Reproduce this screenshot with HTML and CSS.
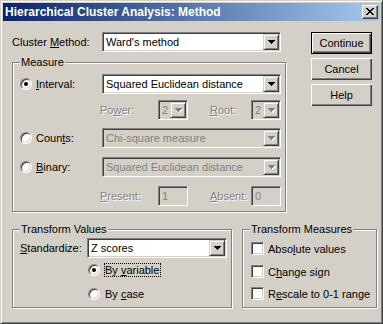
FILE: index.html
```html
<!DOCTYPE html>
<html>
<head>
<meta charset="utf-8">
<link rel="stylesheet" href="styles.css">
</head>
<body>
<div class="window">
  <div class="titlebar">
    <span class="title">Hierarchical Cluster Analysis: Method</span>
    <div class="close">
      <svg width="8" height="7" viewBox="0 0 8 7" shape-rendering="crispEdges">
        <path d="M0 0h2v1h-2zM6 0h2v1h-2zM1 1h2v1h-2zM5 1h2v1h-2zM2 2h4v1h-4zM3 3h2v1h-2zM2 4h4v1h-4zM1 5h2v1h-2zM5 5h2v1h-2zM0 6h2v1h-2zM6 6h2v1h-2z" fill="#000"/>
      </svg>
    </div>
  </div>
  <div class="content">
    <div class="top">
      <div class="left">
        <div class="row cm-row">
          <span class="cm-lbl">Cluster <u>M</u>ethod:</span>
          <div class="combo w-wide">
            <span class="val">Ward's method</span>
            <span class="ddbtn"><svg width="7" height="4" shape-rendering="crispEdges"><path d="M0 0h7v1h-7zM1 1h5v1h-5zM2 2h3v1h-3zM3 3h1v1h-1z" fill="#000"/></svg></span>
          </div>
        </div>
        <div class="group measure">
          <span class="gtitle">Measure</span>
          <div class="row r-interval">
            <span class="opt"><span class="radio on"></span><span><u>I</u>nterval:</span></span>
            <div class="combo w-wide">
              <span class="val">Squared Euclidean distance</span>
              <span class="ddbtn"><svg width="7" height="4" shape-rendering="crispEdges"><path d="M0 0h7v1h-7zM1 1h5v1h-5zM2 2h3v1h-3zM3 3h1v1h-1z" fill="#000"/></svg></span>
            </div>
          </div>
          <div class="row r-power">
            <span class="dis sub-lbl">Po<u>w</u>er:</span>
            <div class="combo w-small disabled">
              <span class="val">2</span>
              <span class="ddbtn"><svg width="8" height="5" shape-rendering="crispEdges"><path d="M1 1h7v1h-7zM2 2h5v1h-5zM3 3h3v1h-3zM4 4h1v1h-1z" fill="#fff"/><path d="M0 0h7v1h-7zM1 1h5v1h-5zM2 2h3v1h-3zM3 3h1v1h-1z" fill="#808080"/></svg></span>
            </div>
            <span class="dis sub-lbl2"><u>R</u>oot:</span>
            <div class="combo w-small disabled">
              <span class="val">2</span>
              <span class="ddbtn"><svg width="8" height="5" shape-rendering="crispEdges"><path d="M1 1h7v1h-7zM2 2h5v1h-5zM3 3h3v1h-3zM4 4h1v1h-1z" fill="#fff"/><path d="M0 0h7v1h-7zM1 1h5v1h-5zM2 2h3v1h-3zM3 3h1v1h-1z" fill="#808080"/></svg></span>
            </div>
          </div>
          <div class="row r-counts">
            <span class="opt"><span class="radio"></span><span>Coun<u>t</u>s:</span></span>
            <div class="combo w-wide disabled">
              <span class="val">Chi-square measure</span>
              <span class="ddbtn"><svg width="8" height="5" shape-rendering="crispEdges"><path d="M1 1h7v1h-7zM2 2h5v1h-5zM3 3h3v1h-3zM4 4h1v1h-1z" fill="#fff"/><path d="M0 0h7v1h-7zM1 1h5v1h-5zM2 2h3v1h-3zM3 3h1v1h-1z" fill="#808080"/></svg></span>
            </div>
          </div>
          <div class="row r-binary">
            <span class="opt"><span class="radio"></span><span><u>B</u>inary:</span></span>
            <div class="combo w-wide disabled">
              <span class="val">Squared Euclidean distance</span>
              <span class="ddbtn"><svg width="8" height="5" shape-rendering="crispEdges"><path d="M1 1h7v1h-7zM2 2h5v1h-5zM3 3h3v1h-3zM4 4h1v1h-1z" fill="#fff"/><path d="M0 0h7v1h-7zM1 1h5v1h-5zM2 2h3v1h-3zM3 3h1v1h-1z" fill="#808080"/></svg></span>
            </div>
          </div>
          <div class="row r-present">
            <span class="dis sub-lbl"><u>P</u>resent:</span>
            <div class="edit w-small disabled"><span class="val">1</span></div>
            <span class="dis sub-lbl2"><u>A</u>bsent:</span>
            <div class="edit w-small disabled"><span class="val">0</span></div>
          </div>
        </div>
      </div>
      <div class="buttons">
        <div class="btn default">Continue</div>
        <div class="btn">Cancel</div>
        <div class="btn">Help</div>
      </div>
    </div>
    <div class="bottom">
      <div class="group tvalues">
        <span class="gtitle">Transform Values</span>
        <div class="row std-row">
          <span class="std-lbl"><u>S</u>tandardize:</span>
          <div class="combo w-std">
            <span class="val">Z scores</span>
            <span class="ddbtn"><svg width="7" height="4" shape-rendering="crispEdges"><path d="M0 0h7v1h-7zM1 1h5v1h-5zM2 2h3v1h-3zM3 3h1v1h-1z" fill="#000"/></svg></span>
          </div>
        </div>
        <div class="rrow rrow1"><span class="radio on"></span><span class="rlbl focus">By <u>v</u>ariable</span></div>
        <div class="rrow rrow2"><span class="radio"></span><span class="rlbl">By <u>c</u>ase</span></div>
      </div>
      <div class="group tmeasures">
        <span class="gtitle">Transform Measures</span>
        <div class="crow crow1"><span class="check"></span><span>Abso<u>l</u>ute values</span></div>
        <div class="crow crow2"><span class="check"></span><span>C<u>h</u>ange sign</span></div>
        <div class="crow crow3"><span class="check"></span><span>R<u>e</u>scale to 0-1 range</span></div>
      </div>
    </div>
  </div>
</div>
</body>
</html>
```

FILE: styles.css
```css
html, body {
  margin: 0;
  padding: 0;
  background: #d4d0c8;
}
body {
  font-family: "Liberation Sans", Arial, sans-serif;
  font-size: 11px;
  color: #000;
}
u { text-decoration: underline; text-underline-offset: 1px; }

.window {
  width: 383px;
  height: 324px;
  box-sizing: border-box;
  border: 1px solid;
  border-color: #d4d0c8 #404040 #404040 #d4d0c8;
  box-shadow: inset 1px 1px 0 #fff, inset -1px -1px 0 #808080;
  padding: 2px;
  background: #d4d0c8;
}

.titlebar {
  height: 18px;
  display: flex;
  align-items: center;
  padding-left: 2px;
  background: linear-gradient(to right, #0a246a, #a6caf0);
}
.title {
  color: #fff;
  font-weight: bold;
  font-size: 12px;
  white-space: nowrap;
}
.close {
  margin-left: auto;
  margin-right: 2px;
  width: 16px;
  height: 14px;
  box-sizing: border-box;
  background: #d4d0c8;
  border: 1px solid;
  border-color: #fff #404040 #404040 #fff;
  box-shadow: inset -1px -1px 0 #808080;
  display: flex;
  align-items: center;
  justify-content: center;
  padding: 0 1px 1px 0;
}
.close svg { display: block; }

.content {
  padding: 11px 0 0 9px;
}
.top { display: flex; }
.left { width: 274px; }

.row {
  display: flex;
  align-items: center;
  height: 20px;
}
.cm-lbl { width: 90px; }

.combo, .edit {
  display: flex;
  height: 20px;
  box-sizing: border-box;
  border: 1px solid;
  border-color: #808080 #fff #fff #808080;
  box-shadow: inset 1px 1px 0 #404040, inset -1px -1px 0 #d4d0c8;
  padding: 1px;
  background: #fff;
}
.combo.disabled, .edit.disabled { background: #d4d0c8; }
.disabled .val { color: #808080; }
.val {
  flex: 1;
  line-height: 16px;
  padding-left: 2px;
  white-space: nowrap;
  overflow: hidden;
}
.ddbtn {
  width: 16px;
  height: 16px;
  box-sizing: border-box;
  flex: none;
  background: #d4d0c8;
  border: 1px solid;
  border-color: #d4d0c8 #404040 #404040 #d4d0c8;
  box-shadow: inset 1px 1px 0 #fff, inset -1px -1px 0 #808080;
  display: flex;
  align-items: center;
  justify-content: center;
}
.ddbtn svg { display: block; margin-left: 1px; }
.disabled .ddbtn svg { margin-left: 2px; margin-top: 1px; }

.w-wide { width: 179px; }
.w-small { width: 30px; }
.w-std { width: 140px; }

.group {
  position: relative;
  box-sizing: border-box;
  border: 1px solid #808080;
  box-shadow: 1px 1px 0 #fff, inset 1px 1px 0 #fff;
}
.gtitle {
  position: absolute;
  top: -7px;
  left: 7px;
  padding: 0 1px;
  line-height: 13px;
  background: #d4d0c8;
  white-space: nowrap;
}

.measure {
  margin-top: 10px;
  width: 274px;
  height: 150px;
  padding: 11px 0 0 7px;
}
.opt {
  width: 82px;
  display: flex;
  align-items: center;
}
.radio {
  position: relative;
  flex: none;
  width: 12px;
  height: 12px;
  box-sizing: border-box;
  border-radius: 50%;
  border: 1px solid;
  border-color: #808080 #fff #fff #808080;
  box-shadow: inset 1px 1px 0 #404040, inset -1px -1px 0 #d4d0c8;
  background: #fff;
  margin-right: 4px;
}
.radio.on::after {
  content: "";
  position: absolute;
  left: 3px;
  top: 3px;
  width: 4px;
  height: 4px;
  border-radius: 50%;
  background: #000;
}
.r-power { margin-top: 6px; }
.r-counts { margin-top: 8px; }
.r-binary { margin-top: 9px; }
.r-present { margin-top: 9px; }
.sub-lbl { margin-left: 80px; width: 58px; }
.sub-lbl2 { margin-left: 22px; width: 41px; }
.dis {
  color: #808080;
  text-shadow: 1px 1px 0 #fff;
}

.buttons {
  margin-left: 25px;
  width: 61px;
  display: flex;
  flex-direction: column;
  gap: 4px;
}
.btn {
  height: 22px;
  box-sizing: border-box;
  display: flex;
  align-items: center;
  justify-content: center;
  box-shadow: inset 1px 1px 0 #fff, inset -1px -1px 0 #404040, inset -2px -2px 0 #808080;
  background: #d4d0c8;
}
.btn.default {
  border: 1px solid #000;
}

.bottom {
  display: flex;
  margin-top: 17px;
}
.tvalues {
  width: 220px;
  height: 79px;
  padding: 8px 0 0 7px;
}
.std-lbl { width: 67px; }
.rrow {
  display: flex;
  align-items: center;
  height: 14px;
  margin-left: 68px;
}
.rrow1 { margin-top: 5px; }
.rrow2 { margin-top: 10px; }
.rlbl {
  border: 1px dotted transparent;
  padding: 0 1px 0 0;
  line-height: 12px;
}
.rlbl.focus { border-color: #000; }

.tmeasures {
  margin-left: 10px;
  width: 135px;
  height: 79px;
  padding: 12px 0 0 8px;
}
.crow {
  display: flex;
  align-items: center;
  height: 13px;
  white-space: nowrap;
}
.crow2 { margin-top: 10px; }
.crow3 { margin-top: 9px; }
.check {
  flex: none;
  width: 13px;
  height: 13px;
  box-sizing: border-box;
  border: 1px solid;
  border-color: #808080 #fff #fff #808080;
  box-shadow: inset 1px 1px 0 #404040, inset -1px -1px 0 #d4d0c8;
  background: #fff;
  margin-right: 4px;
}
```
